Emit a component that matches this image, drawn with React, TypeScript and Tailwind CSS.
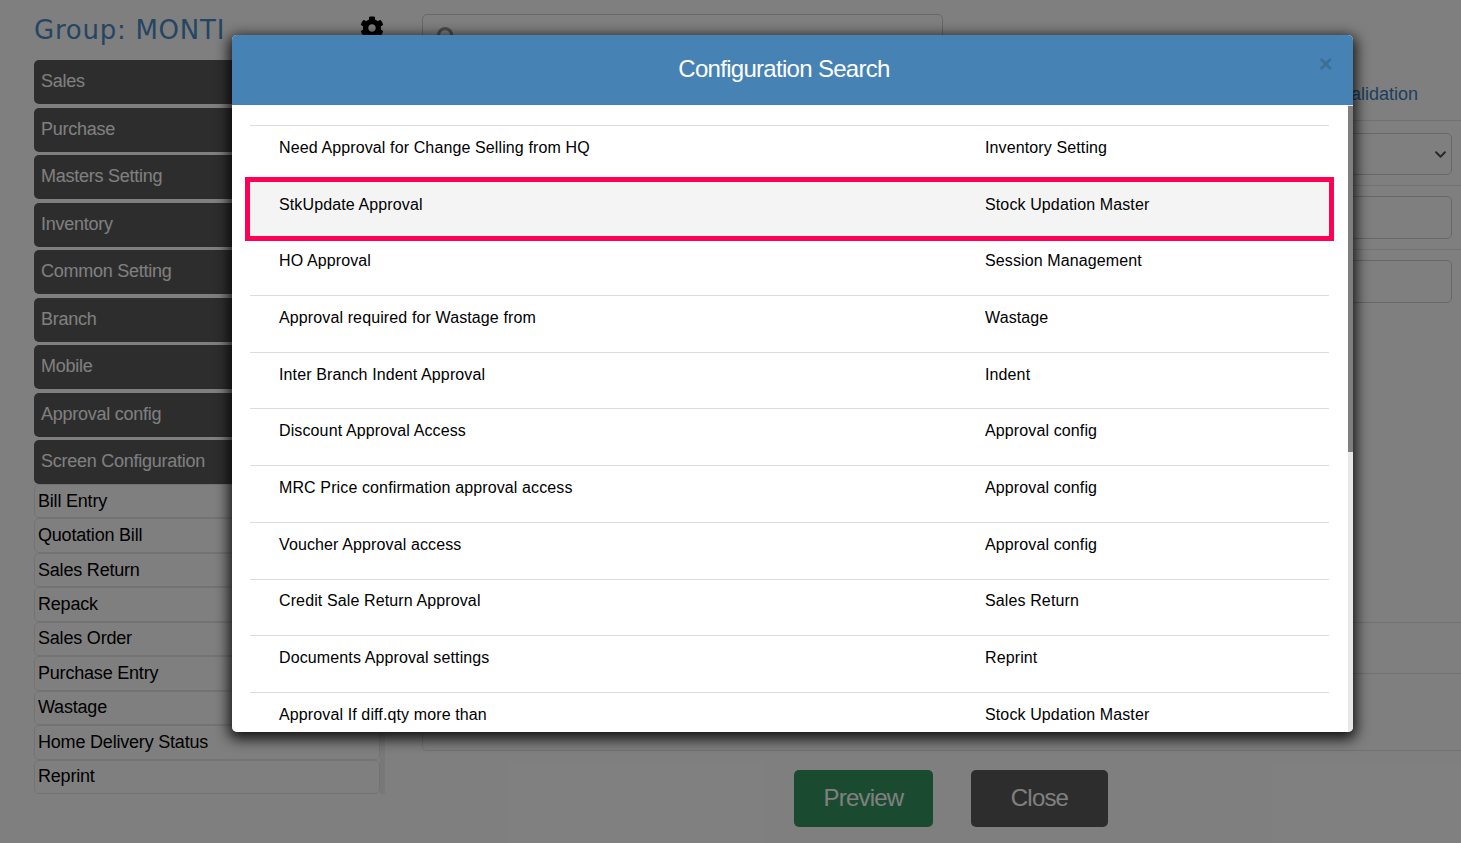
import { FaCog, FaSearch, FaChevronDown } from 'react-icons/fa'

const groups = [
  'Sales',
  'Purchase',
  'Masters Setting',
  'Inventory',
  'Common Setting',
  'Branch',
  'Mobile',
  'Approval config',
  'Screen Configuration',
]

const screens = [
  'Bill Entry',
  'Quotation Bill',
  'Sales Return',
  'Repack',
  'Sales Order',
  'Purchase Entry',
  'Wastage',
  'Home Delivery Status',
  'Reprint',
]

const results = [
  ['Need Approval for Change Selling from HQ', 'Inventory Setting'],
  ['StkUpdate Approval', 'Stock Updation Master'],
  ['HO Approval', 'Session Management'],
  ['Approval required for Wastage from', 'Wastage'],
  ['Inter Branch Indent Approval', 'Indent'],
  ['Discount Approval Access', 'Approval config'],
  ['MRC Price confirmation approval access', 'Approval config'],
  ['Voucher Approval access', 'Approval config'],
  ['Credit Sale Return Approval', 'Sales Return'],
  ['Documents Approval settings', 'Reprint'],
  ['Approval If diff.qty more than', 'Stock Updation Master'],
]

function Sidebar() {
  return (
    <aside className="w-[351px] shrink-0">
      <div className="flex h-[60px] items-start justify-between">
        <h1 className="mt-[11px] font-['DejaVu_Sans',sans-serif] text-[26px] leading-[38px] tracking-[0.75px] text-[#4a8bc4]">
          Group: MONTI
        </h1>
        <FaCog className="mr-[1px] mt-[16px] text-[24px] text-black" />
      </div>
      <div className="flex border-r-[5px] border-[#f0f0f0]">
        <div className="flex flex-1 flex-col">
          <div className="flex flex-col gap-[3.5px]">
            {groups.map((name) => (
              <div
                key={name}
                className="flex h-[44px] items-center rounded-[5px] bg-[#5a5a5a] pb-[1px] pl-[7px] text-[18px] tracking-[-0.25px] text-white"
              >
                {name}
              </div>
            ))}
          </div>
          {screens.map((name) => (
            <div
              key={name}
              className="flex h-[34.45px] items-center rounded-[5px] border border-[#e6e6e6] pl-[3px] text-[18px] tracking-[-0.2px] text-black"
            >
              {name}
            </div>
          ))}
        </div>
      </div>
    </aside>
  )
}

function MainPanel() {
  return (
    <main className="ml-[37px] flex-1">
      <div className="mt-[14px] flex h-[42px] w-[521px] items-center rounded-[5px] border border-[#d0d0d0] pl-[14px] pt-[4px]">
        <FaSearch className="text-[20px] text-[#999999]" />
      </div>
      <div className="flex h-[64px] items-end justify-end pb-[12px] pr-[43px] text-[18px] text-[#3b7cc0]">
        Validation
      </div>
      <div className="border-t border-[#e2e2e2] pt-[12px]">
        <div className="mr-[9px] flex h-[42px] items-center justify-end rounded-[5px] border border-[#cfcfcf] pr-[4px]">
          <FaChevronDown className="text-[13px] text-[#555555]" />
        </div>
        <div className="mt-[10px] border-t border-[#e6e6e6] pt-[10px]">
          <div className="mr-[9px] h-[43px] rounded-[5px] border border-[#cfcfcf]" />
        </div>
        <div className="mt-[10px] border-t border-[#e6e6e6] pt-[10px]">
          <div className="mr-[9px] h-[43px] rounded-[5px] border border-[#cfcfcf]" />
        </div>
      </div>
      <div className="mt-[319px] h-[51px] border-t border-[#e2e2e2]" />
      <div className="h-[78px] rounded-bl-[5px] border-b border-l border-t border-[#e2e2e2]" />
      <div className="mt-[19px] flex pl-[372px]">
        <button className="flex h-[57px] w-[139px] items-center justify-center rounded-[5px] bg-[#349660] pb-[1px] text-[24px] tracking-[-0.8px] text-white">
          Preview
        </button>
        <button className="ml-[38px] flex h-[57px] w-[137px] items-center justify-center rounded-[5px] bg-[#5a5a5a] pb-[1px] text-[24px] tracking-[-0.8px] text-white">
          Close
        </button>
      </div>
    </main>
  )
}

function SearchModal() {
  return (
    <div className="absolute left-[232px] top-[35px] z-20 h-[697px] w-[1121px] rounded-[5px] shadow-[0_4px_14px_3px_rgba(0,0,0,0.85)]">
      <div className="flex h-full flex-col overflow-hidden rounded-[5px] bg-white">
        <header className="relative flex h-[70px] shrink-0 items-center justify-center bg-[#4682b4] pb-[2px] pr-[17px] text-[24px] tracking-[-0.7px] text-white">
          Configuration Search
          <span className="absolute right-[21px] top-[13px] text-[24px] font-bold leading-[32px] text-[#3d6f94]">×</span>
        </header>
        <div className="flex min-h-0 flex-1">
          <div className="min-w-0 flex-1 overflow-hidden pl-[18px] pr-[19px] pt-[20px]">
            {results.map(([label, screen], i) =>
              i === 1 ? (
                <div key={label} className="h-[56.7px]">
                  <div className="relative z-10 grid h-[54.5px] grid-cols-[706px_1fr] bg-[#f4f4f4] pl-[29px] pt-[13.95px] text-[16px] leading-[18px] tracking-[0.12px] text-black outline-[5px] outline-[#ff0055]">
                    <span>{label}</span>
                    <span>{screen}</span>
                  </div>
                </div>
              ) : (
                <div
                  key={label}
                  className="grid h-[56.7px] grid-cols-[706px_1fr] border-t border-[#dddddd] pl-[29px] pt-[12.95px] text-[16px] leading-[18px] tracking-[0.12px] text-black"
                >
                  <span>{label}</span>
                  <span>{screen}</span>
                </div>
              ),
            )}
          </div>
          <div className="w-[5px] shrink-0 bg-[#e8e8e8]">
            <div className="mt-px h-[346px] bg-[#7f7f7f]" />
          </div>
        </div>
      </div>
    </div>
  )
}

export default function App() {
  return (
    <div className="relative h-[843px] overflow-hidden bg-white font-['Liberation_Sans',Arial,sans-serif]">
      <div className="flex pl-[34px]">
        <Sidebar />
        <MainPanel />
      </div>
      <div className="absolute inset-0 bg-black/50" />
      <SearchModal />
    </div>
  )
}
